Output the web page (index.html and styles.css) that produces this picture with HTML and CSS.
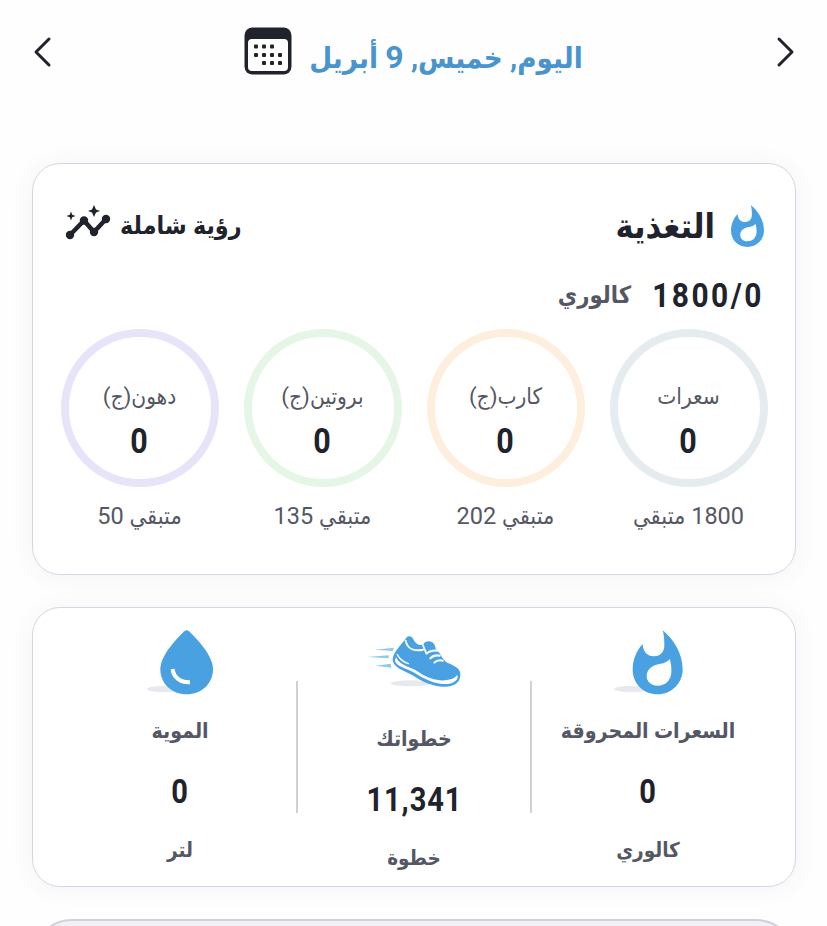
FILE: index.html
```html
<!DOCTYPE html>
<html lang="ar" dir="rtl">
<head>
    <meta charset="UTF-8">
    <meta name="viewport" content="width=device-width, initial-scale=1.0">
    <title>التغذية</title>
    <link rel="stylesheet" href="styles.css">
</head>
<body>
    <header class="date-bar">
        <button class="arrow-btn" aria-label="السابق">
            <svg width="20" height="32" viewBox="0 0 20 32"><path d="M4 3 L17 16 L4 29"/></svg>
        </button>
        <div class="current-date">
            <h1 class="date-title">اليوم, خميس, <span class="num">9</span> أبريل</h1>
            <svg class="calendar-icon" width="48" height="48" viewBox="0 0 48 48">
                <rect x="0.500" y="0.500" width="47" height="47" rx="8" fill="#20222c"/>
                <rect x="4" y="12" width="40" height="32" rx="4" fill="#fff"/>
                <g fill="#20222c">
                    <rect x="10" y="17.500" width="4" height="4" rx="1"/>
                    <rect x="18" y="17.500" width="4" height="4" rx="1"/>
                    <rect x="26" y="17.500" width="4" height="4" rx="1"/>
                    <rect x="10" y="26" width="4" height="4" rx="1"/>
                    <rect x="18" y="26" width="4" height="4" rx="1"/>
                    <rect x="26" y="26" width="4" height="4" rx="1"/>
                    <rect x="34" y="26" width="4" height="4" rx="1"/>
                    <rect x="18" y="34" width="4" height="4" rx="1"/>
                    <rect x="26" y="34" width="4" height="4" rx="1"/>
                    <rect x="34" y="34" width="4" height="4" rx="1"/>
                </g>
            </svg>
        </div>
        <button class="arrow-btn" aria-label="التالي">
            <svg width="20" height="32" viewBox="0 0 20 32"><path d="M17 3 L4 16 L17 29"/></svg>
        </button>
    </header>

    <main>
        <section class="card nutrition">
            <div class="card-header">
                <div class="card-heading">
                    <svg width="33" height="42" viewBox="277 90 150 192" preserveAspectRatio="none">
                        <path fill="#4aa1e2" fill-rule="evenodd" d="M367 90 C398 115 427 158 427 207 C427 251 392 282 352 282 C309 282 277 251 277 207 C277 177 289 151 307 131 C308 153 320 168 341 168 C361 168 372 154 372 135 C372 118 371 103 367 90 Z M388 176 C378 189 366 189 348 193 C330 198 319 211 319 227 C319 244 333 256 351 256 C375 256 391 240 393 217 C394 202 392 188 388 176 Z"/>
                    </svg>
                    <h2 class="card-title">التغذية</h2>
                </div>
                <a class="insights">
                    <span>رؤية شاملة</span>
                    <svg class="insights-icon" width="46" height="36" viewBox="0 0 46 36" fill="#20222c">
                        <path d="M5 30 L19 15.500 L29 27 L41 14" fill="none" stroke="#20222c" stroke-width="4.500" stroke-linejoin="round"/>
                        <circle cx="5" cy="30" r="4.200"/>
                        <circle cx="19" cy="15.500" r="4.200"/>
                        <circle cx="29" cy="27" r="4.200"/>
                        <circle cx="41" cy="14" r="4.200"/>
                        <path d="M29 0 L31 4.500 L35 6 L31 7.500 L29 12 L27 7.500 L23 6 L27 4.500 Z"/>
                        <path d="M6 6.500 L7.200 9.800 L10.500 11 L7.200 12.200 L6 15.500 L4.800 12.200 L1.500 11 L4.800 9.800 Z"/>
                    </svg>
                </a>
            </div>

            <div class="total">
                <span class="total-value" dir="ltr">1800/0</span>
                <span class="total-unit">كالوري</span>
            </div>

            <div class="macros">
                <div class="macro">
                    <div class="ring ring-calories">
                        <span class="ring-label">سعرات</span>
                        <span class="ring-value">0</span>
                    </div>
                    <p class="remaining"><span class="num">1800</span> متبقي</p>
                </div>
                <div class="macro">
                    <div class="ring ring-carbs">
                        <span class="ring-label">كارب(ج)</span>
                        <span class="ring-value">0</span>
                    </div>
                    <p class="remaining">متبقي <span class="num">202</span></p>
                </div>
                <div class="macro">
                    <div class="ring ring-protein">
                        <span class="ring-label">بروتين(ج)</span>
                        <span class="ring-value">0</span>
                    </div>
                    <p class="remaining">متبقي <span class="num">135</span></p>
                </div>
                <div class="macro">
                    <div class="ring ring-fat">
                        <span class="ring-label">دهون(ج)</span>
                        <span class="ring-value">0</span>
                    </div>
                    <p class="remaining">متبقي <span class="num">50</span></p>
                </div>
            </div>
        </section>

        <section class="card activity">
            <div class="stat">
                <svg class="stat-icon" width="69" height="65" viewBox="221 89 207 195">
                    <ellipse cx="275" cy="266" rx="54" ry="10" fill="#e8e9ef"/>
                    <path fill="#4aa1e2" d="M367 90 C398 115 427 158 427 207 C427 251 392 282 352 282 C309 282 277 251 277 207 C277 177 289 151 307 131 C308 153 320 168 341 168 C361 168 372 154 372 135 C372 118 371 103 367 90 Z"/>
                    <path fill="#fff" d="M388 176 C378 189 366 189 348 193 C330 198 319 211 319 227 C319 244 333 256 351 256 C375 256 391 240 393 217 C394 202 392 188 388 176 Z"/>
                </svg>
                <h3 class="stat-label">السعرات المحروقة</h3>
                <p class="stat-value">0</p>
                <p class="stat-unit">كالوري</p>
            </div>
            <div class="stat stat-steps">
                <svg class="stat-icon" width="97" height="65" viewBox="80 89 291 195">
                    <ellipse cx="214" cy="249" rx="60" ry="9" fill="#e8e9ef"/>
                    <g fill="#8fcbe6">
                        <path d="M106 148 L164 142 L160 152 Z"/>
                        <path d="M82 170 L148 165 L148 174 Z"/>
                        <path d="M108 196 L154 190 L156 202 Z"/>
                    </g>
                    <path fill="#4aa1e2" d="M201 112 C208 104 218 107 222 117 C229 132 240 137 252 133 C253 126 262 122 271 123 C284 125 288 137 289 145 C306 160 309 181 326 188 C346 196 365 206 363 225 C362 249 342 259 318 259 C280 260 248 243 218 224 C195 212 164 203 160 180 C159 159 181 138 201 112 Z"/>
                    <g fill="none" stroke="#fff" stroke-linecap="round">
                        <path d="M199 121 C204 148 222 153 251 148" stroke-width="6"/>
                        <path d="M251 135 L261 159" stroke-width="5"/>
                        <path d="M262 160 C272 150 282 150 294 151" stroke-width="6"/>
                        <path d="M273 174 C282 165 292 164 301 166" stroke-width="6"/>
                        <path d="M285 187 C293 179 301 179 310 181" stroke-width="6"/>
                        <path d="M174 163 C181 177 192 185 207 190" stroke-width="4"/>
                    </g>
                    <path fill="#fff" d="M170 171 C182 198 218 200 239 216 C270 238 306 245 334 237 C344 234 350 229 353 224 C360 233 348 248 327 251 C289 253 256 237 225 217 C199 203 166 197 167 179 Z"/>
                </svg>
                <h3 class="stat-label">خطواتك</h3>
                <p class="stat-value">11,341</p>
                <p class="stat-unit">خطوة</p>
            </div>
            <div class="stat">
                <svg class="stat-icon" width="67" height="65" viewBox="50 89 201 195">
                    <ellipse cx="100" cy="266" rx="50" ry="10" fill="#e8e9ef"/>
                    <path fill="#4aa1e2" d="M162 93 Q169 87 176 93 C208 124 248 169 248 207 C248 251 213 282 169 282 C125 282 90 251 90 207 C90 169 130 124 162 93 Z"/>
                    <path fill="none" stroke="#fff" stroke-width="12" d="M127 206 C129 231 150 247 179 246"/>
                </svg>
                <h3 class="stat-label">الموية</h3>
                <p class="stat-value">0</p>
                <p class="stat-unit">لتر</p>
            </div>
        </section>

        <section class="card next-card"></section>
    </main>
</body>
</html>
```
FILE: styles.css
```css
* {
    box-sizing: border-box;
}

body {
    margin: 0;
    height: 926px;
    overflow: hidden;
    background-color: #fefefe;
    color: #20222c;
    font-family: Roboto, 'DejaVu Sans Condensed', 'DejaVu Sans', sans-serif;
}

h1, h2, h3, p {
    margin: 0;
}

.date-bar {
    display: flex;
    align-items: center;
    justify-content: space-between;
    height: 103px;
    padding: 0 32px;
}

.arrow-btn {
    display: flex;
    padding: 0;
    border: none;
    background: none;
    cursor: pointer;
}

.arrow-btn path {
    fill: none;
    stroke: #20222c;
    stroke-width: 3;
    stroke-linecap: round;
    stroke-linejoin: round;
}

.current-date {
    display: flex;
    align-items: center;
    gap: 17px;
}

.calendar-icon {
    margin-bottom: 1px;
}

.date-title {
    padding-top: 11px;
    font-size: 29.3px;
    line-height: 40px;
    font-weight: bold;
    color: #4994cd;
    white-space: nowrap;
}

.date-title .num {
    font-size: 32px;
}

main {
    display: flex;
    flex-direction: column;
    gap: 32px;
    height: 823px;
    padding: 60px 31px 0 32px;
    overflow: hidden;
}

.card {
    flex-shrink: 0;
    background-color: #fff;
    border: 1px solid #d5d6df;
    border-radius: 28px;
    box-shadow: 0 2px 24px rgba(70, 70, 130, 0.06);
}

.nutrition {
    height: 412px;
    padding: 35px 15px 0;
}

.card-header {
    display: flex;
    align-items: center;
    justify-content: space-between;
    height: 54px;
    padding: 0 16px;
}

.card-heading {
    display: flex;
    align-items: center;
    gap: 16px;
}

.card-title {
    font-size: 34px;
    line-height: 40px;
}

.insights {
    display: flex;
    align-items: center;
    gap: 9px;
    font-size: 24.8px;
    font-weight: bold;
    line-height: 36px;
    white-space: nowrap;
}

.insights-icon {
    margin: 0 0 6px 1px;
}

.total {
    display: flex;
    align-items: center;
    gap: 19px;
    height: 76px;
    padding: 8px 16px 0;
}

.total-value {
    margin-left: -13px;
    font-size: 34px;
    font-weight: bold;
    letter-spacing: 2.8px;
    transform: scaleX(0.88);
    transform-origin: right;
}

.total-unit {
    font-size: 23.6px;
    font-weight: bold;
    color: #555864;
}

.macros {
    display: grid;
    grid-template-columns: repeat(4, 1fr);
}

.macro {
    display: flex;
    flex-direction: column;
    align-items: center;
}

.ring {
    display: flex;
    flex-direction: column;
    align-items: center;
    width: 158px;
    height: 158px;
    padding-top: 43px;
    border: 8px solid;
    border-radius: 50%;
}

.ring-calories {
    border-color: #e5ecf0;
}

.ring-carbs {
    border-color: #fdeedd;
}

.ring-protein {
    border-color: #e5f5e6;
}

.ring-fat {
    border-color: #e7e4fa;
}

.ring-label {
    font-size: 22.5px;
    line-height: 32px;
    color: #555864;
}

.ring-value {
    font-size: 35px;
    font-weight: bold;
    line-height: 60px;
    transform: scaleX(0.87);
}

.remaining {
    margin-top: 13px;
    font-size: 23.5px;
    line-height: 32px;
    color: #555864;
    white-space: nowrap;
}

.remaining .num {
    letter-spacing: 0.7px;
}

.activity {
    display: grid;
    grid-template-columns: repeat(3, 234px);
    justify-content: center;
    height: 280px;
    padding-top: 22px;
}

.stat {
    position: relative;
    display: flex;
    flex-direction: column;
    align-items: center;
}

.stat + .stat::before {
    content: '';
    position: absolute;
    top: 51px;
    right: -1px;
    width: 2px;
    height: 132px;
    background-color: #cfd0d8;
}

.stat-label {
    margin-top: 20px;
    font-size: 21.2px;
    line-height: 32px;
    color: #555864;
    white-space: nowrap;
}

.stat-value {
    margin-top: 25px;
    font-size: 33px;
    font-weight: bold;
    line-height: 40px;
    letter-spacing: 1px;
    transform: scaleX(0.88);
}

.stat-unit {
    margin-top: 22px;
    font-size: 20.5px;
    font-weight: bold;
    line-height: 32px;
    color: #555864;
}

.stat-steps .stat-label {
    margin-top: 28px;
}

.next-card {
    height: 120px;
    border: 2px solid #cfd0da;
    border-radius: 40px;
    background-color: #f1f1f7;
    box-shadow: none;
}
```
